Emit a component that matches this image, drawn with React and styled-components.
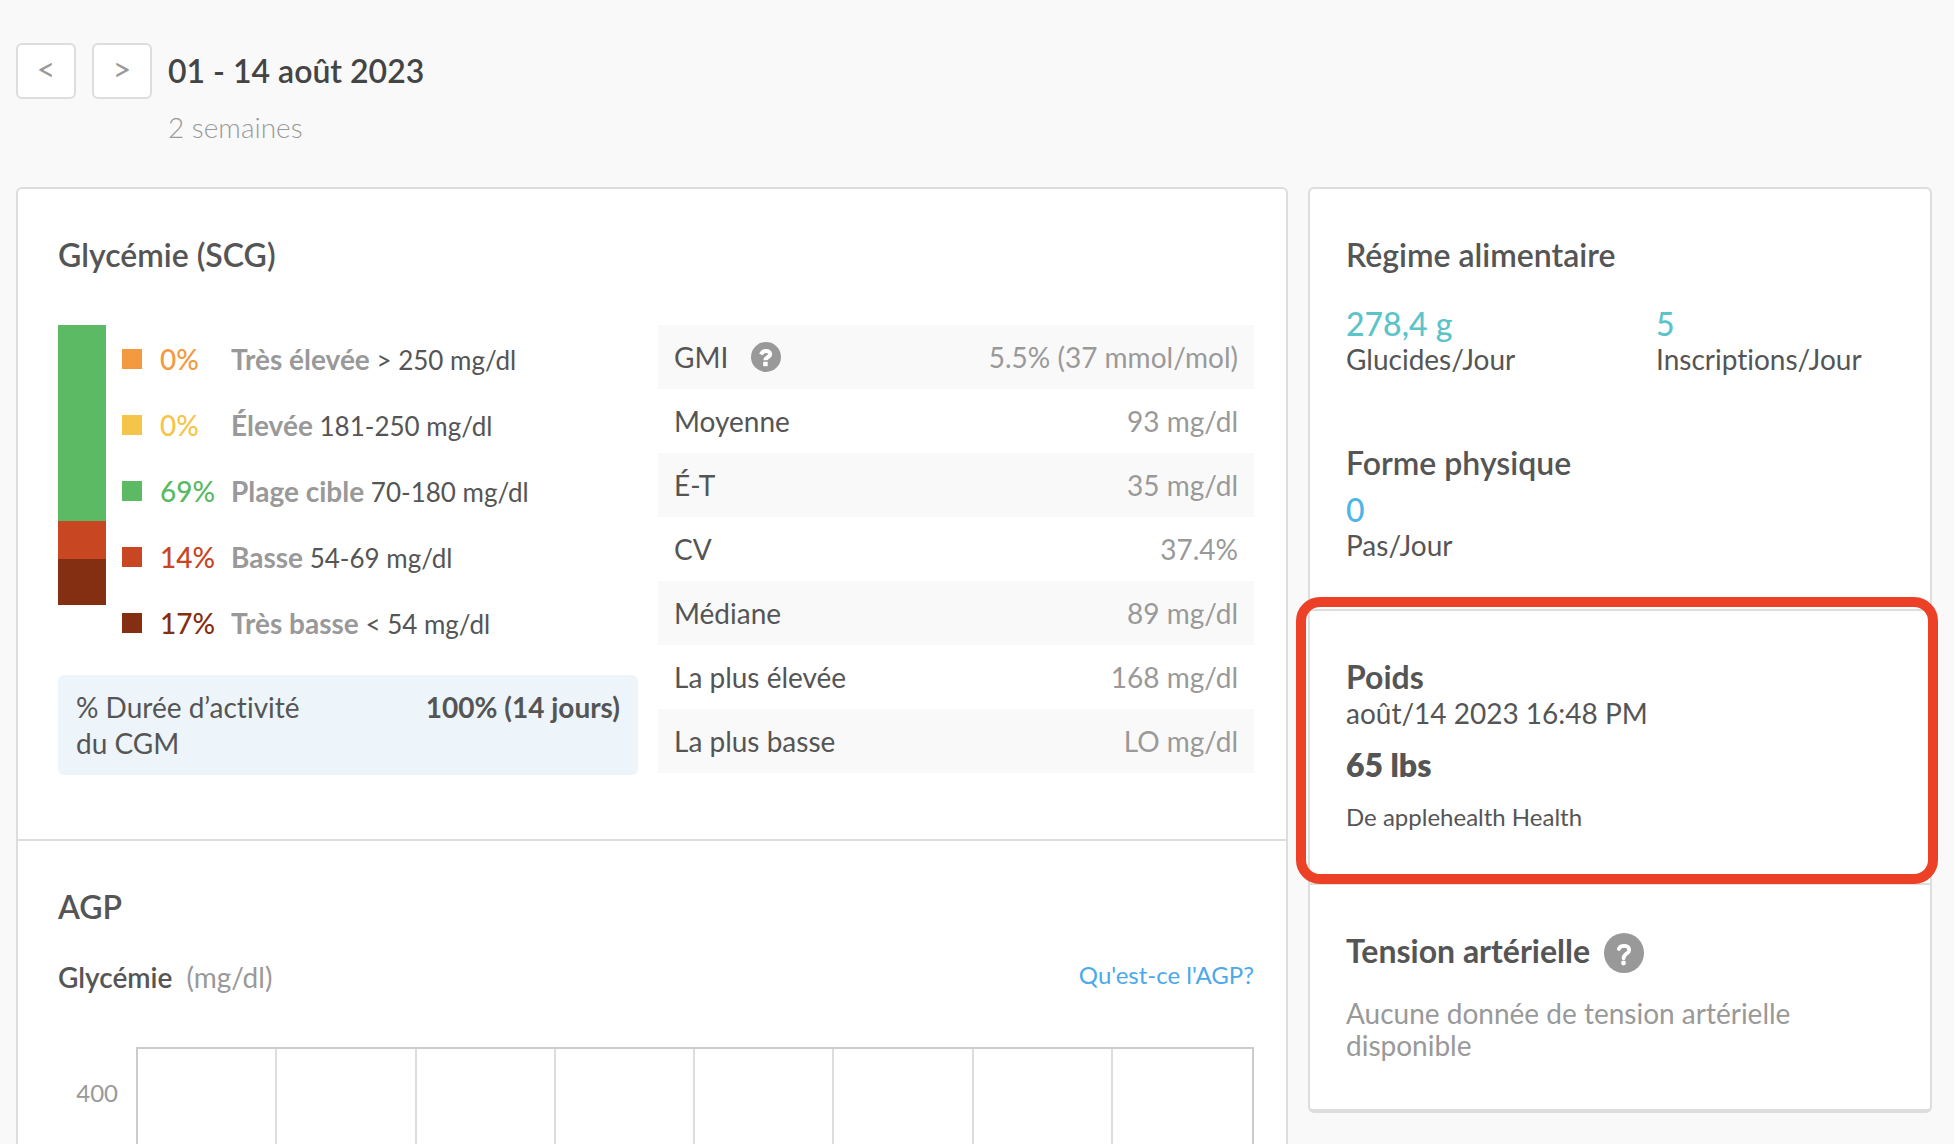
import React, { Component } from 'react';
import styled, { createGlobalStyle } from 'styled-components';

const ranges = [
	{ share: "0%", name: "Très élevée", limits: "> 250 mg/dl", color: "#f39a41", height: 0 },
	{ share: "0%", name: "Élevée", limits: "181-250 mg/dl", color: "#f5c549", height: 0 },
	{ share: "69%", name: "Plage cible", limits: "70-180 mg/dl", color: "#5cb964", height: 196 },
	{ share: "14%", name: "Basse", limits: "54-69 mg/dl", color: "#c84622", height: 38 },
	{ share: "17%", name: "Très basse", limits: "< 54 mg/dl", color: "#842e12", height: 46 },
];

const stats = [
	["GMI", "5.5% (37 mmol/mol)", true],
	["Moyenne", "93 mg/dl"],
	["É-T", "35 mg/dl"],
	["CV", "37.4%"],
	["Médiane", "89 mg/dl"],
	["La plus élevée", "168 mg/dl"],
	["La plus basse", "LO mg/dl"],
];

const SmallHelpIcon = () => (
	<svg width="30" height="30" viewBox="0 0 30 30" fill="none" aria-hidden="true">
		<circle cx="15" cy="15" r="15" fill="#999" />
		<path d="M10 12.5C11 10 12.6 8.9 15 8.9C17.4 8.9 19.2 10.2 19.2 12.3C19.2 15 14.4 15 14.4 18.3" stroke="#fff" strokeWidth="4" />
		<rect x="12.2" y="19.8" width="4.5" height="4.4" fill="#fff" />
	</svg>
);

const LargeHelpIcon = () => (
	<svg width="40" height="40" viewBox="0 0 40 40" fill="none" aria-hidden="true">
		<circle cx="20" cy="20" r="20" fill="#999" />
		<path d="M14.8 16C15.5 14 17.2 12.8 20 12.8C23 12.8 25.2 14.3 25.2 16.9C25.2 20.5 19.6 20.6 19.6 25.2" stroke="#fff" strokeWidth="3.8" strokeLinecap="round" />
		<circle cx="19.5" cy="30" r="2.4" fill="#fff" />
	</svg>
);

class App extends Component {

	render() {
		return (
			<Page>
				<GlobalStyle />
				<Header>
					<NavButton type="button" aria-label="Période précédente">&lt;</NavButton>
					<NavButton type="button" aria-label="Période suivante">&gt;</NavButton>
					<Period>
						<PeriodTitle>01 - 14 août 2023</PeriodTitle>
						<PeriodLength>2 semaines</PeriodLength>
					</Period>
				</Header>
				<Columns>
					<MainCard>
						<Section $bottom={64}>
							<Title>Glycémie (SCG)</Title>
							<Overview>
								<RangeColumn>
									<RangeRow>
										<Bar>
											{ranges.map((r) => (
												<BarPart key={r.name} style={{ height: r.height, background: r.color }} />
											))}
										</Bar>
										<Legend>
											{ranges.map((r) => (
												<LegendItem key={r.name}>
													<Swatch $color={r.color} />
													<Share $color={r.color}>{r.share}</Share>
													<RangeText><RangeName>{r.name}</RangeName> {r.limits}</RangeText>
												</LegendItem>
											))}
										</Legend>
									</RangeRow>
									<ActiveTime>
										<ActiveLabel>% Durée d’activité du CGM</ActiveLabel>
										<strong>100% (14 jours)</strong>
									</ActiveTime>
								</RangeColumn>
								<Stats>
									<tbody>
										{stats.map(([name, value, help]) => (
											<StatRow key={name}>
												<StatName scope="row">
													<StatLabel>
														{name}
														{help && <HelpButton type="button" aria-label="Aide GMI"><SmallHelpIcon /></HelpButton>}
													</StatLabel>
												</StatName>
												<StatValue>{value}</StatValue>
											</StatRow>
										))}
									</tbody>
								</Stats>
							</Overview>
						</Section>
						<ChartSection>
							<Title>AGP</Title>
							<ChartHead>
								<ChartName>Glycémie</ChartName>
								<Unit>(mg/dl)</Unit>
								<AgpLink href="#agp">Qu'est-ce l'AGP?</AgpLink>
							</ChartHead>
							<Chart>
								<Axis>400</Axis>
								<Plot>
									{[0, 3, 6, 9, 12, 15, 18, 21].map((hour) => <PlotColumn key={hour} />)}
								</Plot>
							</Chart>
						</ChartSection>
					</MainCard>
					<SideCard>
						<Section $bottom={46}>
							<Title>Régime alimentaire</Title>
							<Metrics>
								<div>
									<Value $color="#5bc4c9">278,4 g</Value>
									<Text>Glucides/Jour</Text>
								</div>
								<div>
									<Value $color="#5bc4c9">5</Value>
									<Text>Inscriptions/Jour</Text>
								</div>
							</Metrics>
							<Title>Forme physique</Title>
							<Steps>
								<Value $color="#4db5e6">0</Value>
								<Text>Pas/Jour</Text>
							</Steps>
						</Section>
						<Section $bottom={50}>
							<Title $weight={700}>Poids</Title>
							<Text>août/14 2023 16:48 PM</Text>
							<Weight>65 lbs</Weight>
							<Source>De applehealth Health</Source>
							<Highlight />
						</Section>
						<Section $bottom={48}>
							<TitleRow>
								<Title $weight={700}>Tension artérielle</Title>
								<HelpButton type="button" aria-label="Aide tension artérielle"><LargeHelpIcon /></HelpButton>
							</TitleRow>
							<Empty>Aucune donnée de tension artérielle disponible</Empty>
						</Section>
					</SideCard>
				</Columns>
			</Page>
		);
	}
}

const GlobalStyle = createGlobalStyle`
	* {
		box-sizing: border-box;
	}

	body {
		margin: 0;
		background: #f9f9f9;
		color: #555;
		font: 400 28px/36px Lato, sans-serif;
		font-variant-ligatures: none;
	}

	h1, h2, h3, p {
		margin: 0;
	}

	button {
		font: inherit;
	}
`;

const Page = styled.div`
	min-height: 100vh;
	padding: 43px 22px 0 16px;
	display: flex;
	flex-direction: column;
`;

const Header = styled.header`
	display: flex;
	align-items: flex-start;
	gap: 16px;
	margin-bottom: 42px;
`;

const NavButton = styled.button`
	width: 60px;
	height: 56px;
	padding: 0 0 4px;
	border: 2px solid #ddd;
	border-radius: 6px;
	background: #fff;
	color: #999;
	font-size: 32px;
`;

const Period = styled.div`
	display: flex;
	flex-direction: column;
	gap: 10px;
`;

const PeriodTitle = styled.h1`
	color: #444;
	font-size: 32px;
	font-weight: 600;
	line-height: 56px;
`;

const PeriodLength = styled.p`
	color: #999;
	font-weight: 300;
`;

const Columns = styled.main`
	flex: 1;
	display: grid;
	grid-template-columns: 1272fr 624fr;
	gap: 20px;
`;

const Card = styled.div`
	border: 2px solid #ddd;
	border-radius: 6px;
	background: #fff;
`;

const MainCard = styled(Card)`
	display: flex;
	flex-direction: column;
	border-bottom: 0;
	border-radius: 6px 6px 0 0;
`;

const SideCard = styled(Card)`
	align-self: start;
	border-bottom-width: 4px;
	margin-bottom: 30px;
`;

const Section = styled.section`
	position: relative;
	padding: 48px 32px ${(p) => p.$bottom}px 40px;
	border-bottom: 2px solid #ddd;

	${SideCard} & {
		padding-left: 36px;
	}

	${SideCard} &:last-child {
		border-bottom: 0;
	}
`;

const Title = styled.h2`
	font-size: 32px;
	font-weight: ${(p) => p.$weight || 600};
	line-height: 36px;
`;

const Overview = styled.div`
	display: flex;
	gap: 20px;
	margin-top: 52px;
`;

const RangeColumn = styled.div`
	flex: 1 1 580px;
`;

const RangeRow = styled.div`
	display: flex;
	gap: 16px;
	margin-bottom: 20px;
`;

const Bar = styled.div`
	width: 48px;
`;

const BarPart = styled.div`
	width: 100%;
`;

const Legend = styled.ul`
	margin: 0;
	padding: 0;
	list-style: none;
`;

const LegendItem = styled.li`
	display: flex;
	align-items: center;
	height: 66px;
	padding-top: 2px;
`;

const Swatch = styled.span`
	width: 20px;
	height: 20px;
	margin-right: 18px;
	background: ${(p) => p.$color};
`;

const Share = styled.span`
	width: 71px;
	color: ${(p) => p.$color};
	font-weight: 500;
`;

const RangeText = styled.span`
	font-size: 26px;
	white-space: nowrap;
`;

const RangeName = styled.b`
	color: #999;
	font-size: 28px;
`;

const ActiveTime = styled.div`
	display: flex;
	justify-content: space-between;
	padding: 14px 18px;
	border-radius: 6px;
	background: #edf5fb;
`;

const ActiveLabel = styled.span`
	max-width: 240px;
`;

const Stats = styled.table`
	flex: 1 1 596px;
	align-self: flex-start;
	border-collapse: collapse;
`;

const StatRow = styled.tr`
	height: 64px;

	&:nth-child(odd) {
		background: #f9f9f9;
	}
`;

const StatName = styled.th`
	padding: 0 16px;
	font-weight: 400;
	text-align: left;
`;

const StatLabel = styled.span`
	display: flex;
	align-items: center;
	gap: 23px;
`;

const StatValue = styled.td`
	padding: 0 16px;
	color: #999;
	text-align: right;
`;

const HelpButton = styled.button`
	display: flex;
	padding: 0;
	border: 0;
	background: none;
`;

const ChartSection = styled.section`
	flex: 1;
	display: flex;
	flex-direction: column;
	padding: 48px 32px 0 40px;
`;

const ChartHead = styled.div`
	display: flex;
	align-items: flex-start;
	margin: 34px 0 52px;
`;

const ChartName = styled.h3`
	font-size: 28px;
	font-weight: 600;
`;

const Unit = styled.span`
	margin-left: 14px;
	color: #999;
`;

const AgpLink = styled.a`
	margin-left: auto;
	color: #4aa9e9;
	font-size: 24px;
	line-height: 32px;
	text-decoration: none;
`;

const Chart = styled.div`
	flex: 1;
	display: flex;
`;

const Axis = styled.div`
	width: 78px;
	padding: 30px 18px 0 0;
	color: #999;
	font-size: 24px;
	line-height: 32px;
	text-align: right;
`;

const Plot = styled.div`
	flex: 1;
	display: grid;
	grid-template-columns: repeat(8, 1fr);
	border: 2px solid #ccc;
	border-bottom: 0;
`;

const PlotColumn = styled.div`
	border-right: 2px solid #ddd;

	&:last-child {
		border-right: 0;
	}
`;

const Metrics = styled.div`
	display: grid;
	grid-template-columns: 310px 1fr;
	margin: 34px 0 68px;
`;

const Value = styled.p`
	color: ${(p) => p.$color};
	font-size: 32px;
	font-weight: 500;
	line-height: 34px;
`;

const Text = styled.p`
	white-space: nowrap;
`;

const Steps = styled.div`
	margin-top: 12px;
`;

const Weight = styled.p`
	margin: 16px 0 18px;
	font-size: 32px;
	font-weight: 800;
`;

const Source = styled.p`
	font-size: 24px;
	line-height: 32px;
`;

/* red frame drawn over the card edges */
const Highlight = styled.div`
	position: absolute;
	inset: -14px -8px -1px -14px;
	border: 10px solid #ec4127;
	border-radius: 24px;
	pointer-events: none;
`;

const TitleRow = styled.div`
	display: flex;
	gap: 14px;
`;

const Empty = styled.p`
	margin-top: 24px;
	color: #999;
	line-height: 32px;
`;

export default App
